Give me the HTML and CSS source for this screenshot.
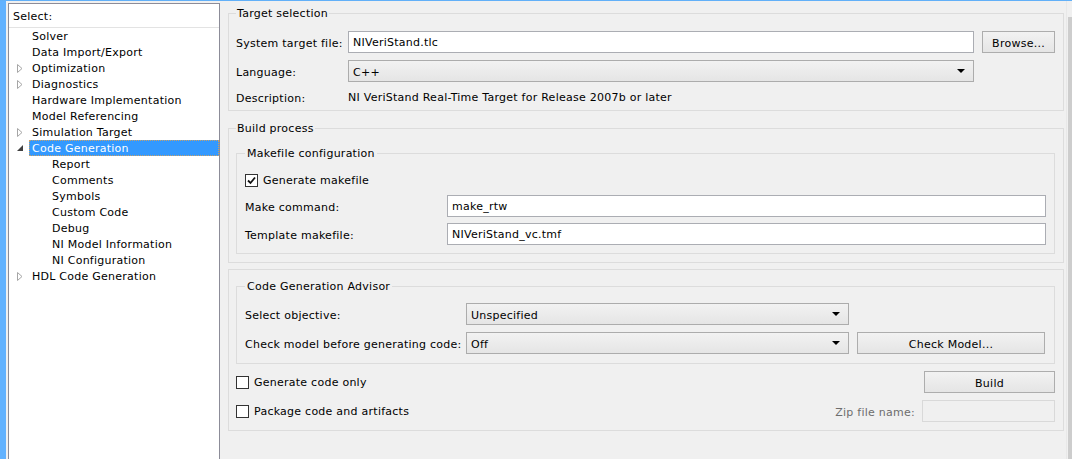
FILE: index.html
```html
<!DOCTYPE html>
<html>
<head>
<meta charset="utf-8">
<link rel="stylesheet" href="styles.css">
</head>
<body>
<div class="window">
  <div class="accent"></div>
  <div class="nav">
    <div class="nav-head">Select:</div>
    <ul class="tree">
      <li class="node"><span class="tw"></span><span class="lbl">Solver</span></li>
      <li class="node"><span class="tw"></span><span class="lbl">Data Import/Export</span></li>
      <li class="node"><span class="tw"><svg width="6" height="9" viewBox="0 0 6 9"><path d="M0.5 0.5 L5 4.5 L0.5 8.5 Z" fill="none" stroke="#a6a6a6"/></svg></span><span class="lbl">Optimization</span></li>
      <li class="node"><span class="tw"><svg width="6" height="9" viewBox="0 0 6 9"><path d="M0.5 0.5 L5 4.5 L0.5 8.5 Z" fill="none" stroke="#a6a6a6"/></svg></span><span class="lbl">Diagnostics</span></li>
      <li class="node"><span class="tw"></span><span class="lbl">Hardware Implementation</span></li>
      <li class="node"><span class="tw"></span><span class="lbl">Model Referencing</span></li>
      <li class="node"><span class="tw"><svg width="6" height="9" viewBox="0 0 6 9"><path d="M0.5 0.5 L5 4.5 L0.5 8.5 Z" fill="none" stroke="#a6a6a6"/></svg></span><span class="lbl">Simulation Target</span></li>
      <li class="node"><span class="tw"><svg width="6" height="6" viewBox="0 0 6 6"><path d="M6 0 L6 6 L0 6 Z" fill="#404040"/></svg></span><span class="lbl sel">Code Generation</span></li>
      <li class="node child"><span class="lbl">Report</span></li>
      <li class="node child"><span class="lbl">Comments</span></li>
      <li class="node child"><span class="lbl">Symbols</span></li>
      <li class="node child"><span class="lbl">Custom Code</span></li>
      <li class="node child"><span class="lbl">Debug</span></li>
      <li class="node child"><span class="lbl">NI Model Information</span></li>
      <li class="node child"><span class="lbl">NI Configuration</span></li>
      <li class="node"><span class="tw"><svg width="6" height="9" viewBox="0 0 6 9"><path d="M0.5 0.5 L5 4.5 L0.5 8.5 Z" fill="none" stroke="#a6a6a6"/></svg></span><span class="lbl">HDL Code Generation</span></li>
    </ul>
  </div>
  <div class="content">
    <fieldset class="group g-target">
      <legend>Target selection</legend>
      <div class="target-grid">
        <label class="lab">System target file:</label>
        <div class="field">NIVeriStand.tlc</div>
        <button class="btn">Browse...</button>
        <label class="lab">Language:</label>
        <div class="combo"><span>C++</span><i class="arrow"></i></div>
        <span></span>
        <label class="lab">Description:</label>
        <div class="desc">NI VeriStand Real-Time Target for Release 2007b or later</div>
      </div>
    </fieldset>

    <fieldset class="group g-build">
      <legend>Build process</legend>
      <fieldset class="group inner g-make">
        <legend>Makefile configuration</legend>
        <div class="check-row"><span class="cb checked"><svg width="9" height="9" viewBox="0 0 9 9"><path d="M1 4.5 L3.5 7 L8 1.5" fill="none" stroke="#111" stroke-width="1.8"/></svg></span><span class="ct">Generate makefile</span></div>
        <div class="make-grid">
          <label class="lab">Make command:</label>
          <div class="field">make_rtw</div>
          <label class="lab">Template makefile:</label>
          <div class="field">NIVeriStand_vc.tmf</div>
        </div>
      </fieldset>
    </fieldset>

    <fieldset class="group g-code">
      <fieldset class="group inner g-adv">
        <legend>Code Generation Advisor</legend>
        <div class="adv-grid">
          <label class="lab">Select objective:</label>
          <div class="combo"><span>Unspecified</span><i class="arrow"></i></div>
          <span></span>
          <label class="lab">Check model before generating code:</label>
          <div class="combo"><span>Off</span><i class="arrow"></i></div>
          <button class="btn">Check Model...</button>
        </div>
      </fieldset>
      <div class="bottom-row">
        <div class="check-row"><span class="cb"></span><span class="ct">Generate code only</span></div>
        <button class="btn wide">Build</button>
      </div>
      <div class="bottom-row">
        <div class="check-row"><span class="cb"></span><span class="ct">Package code and artifacts</span></div>
        <div class="zip"><span class="zip-lab">Zip file name:</span><div class="field disabled"></div></div>
      </div>
    </fieldset>
  </div>
  <div class="scroll"><div class="thumb"></div></div>
</div>
</body>
</html>
```

FILE: styles.css
```css
* { box-sizing: border-box; }
html, body { margin: 0; padding: 0; }
body {
  background: #f0f0f0;
  font-family: "DejaVu Sans", "Liberation Sans", sans-serif;
  font-size: 11px;
  letter-spacing: 0.25px;
  color: #000;
  border-top: 1px solid #62b0f8;
}
.window {
  display: flex;
  height: 458px;
}
.accent {
  width: 6px;
  background: #62b2ff;
  flex: none;
}
.nav {
  width: 212px;
  flex: none;
  margin: 2px 0 0 2px;
  background: #fff;
  border: 1px solid #8c8c98;
  border-bottom: none;
}
.nav-head {
  height: 24px;
  padding-top: 2px;
  line-height: 21px;
  padding-left: 4px;
  border-bottom: 1px solid #e3e3e3;
}
.tree {
  list-style: none;
  margin: 0;
  padding: 0;
}
.node {
  display: flex;
  height: 16px;
}
.tw {
  width: 20px;
  flex: none;
  display: flex;
  align-items: center;
  padding-left: 8px;
}
.tw svg { display: block; }
.lbl {
  flex: 1;
  padding: 2px 3px 0;
  line-height: 14px;
  white-space: nowrap;
}
.child .lbl { padding-left: 43px; }
.sel {
  background: #3399ff;
  color: #fff;
  outline: 1px dotted #c8a068;
  outline-offset: -1px;
}
.content {
  flex: 1;
  padding: 5px 2px 0 8px;
  display: flex;
  flex-direction: column;
}
.scroll {
  width: 6px;
  flex: none;
  border-left: 1px solid #e8e8e8;
  padding-top: 16px;
  display: flex;
  justify-content: flex-end;
}
.thumb {
  width: 4px;
  background: #cdcdcd;
  height: 100%;
}
.group {
  margin: 0;
  border: 1px solid #dcdcdc;
  padding: 11px 8px 5px 7px;
  min-width: 0;
}
.group legend {
  padding: 2px 1px 0;
  line-height: 12px;
}
.inner legend { padding: 2px 2px 0; }
.lab { white-space: nowrap; padding-top: 2px; }
.target-grid {
  display: grid;
  grid-template-columns: 104px 1fr 73px;
  column-gap: 8px;
  row-gap: 7px;
  align-items: center;
}
.field {
  height: 22px;
  padding: 2px 4px 0;
  line-height: 18px;
  background: #fff;
  border: 1px solid #abadb3;
  white-space: nowrap;
}
.field.disabled {
  background: #f0f0f0;
  border-color: #d9d9d9;
}
.combo {
  height: 22px;
  border: 1px solid #acacac;
  background: linear-gradient(#f2f2f2, #e5e5e5);
  display: flex;
  align-items: center;
  justify-content: space-between;
  padding: 0 8px 0 4px;
}
.combo span { padding-top: 2px; }
.arrow {
  width: 0;
  height: 0;
  border-left: 4px solid transparent;
  border-right: 4px solid transparent;
  border-top: 4px solid #000;
}
.btn {
  height: 22px;
  border: 1px solid #adadad;
  background: linear-gradient(#f2f2f2, #e5e5e5);
  font: inherit;
  letter-spacing: inherit;
  color: #000;
  padding: 2px 0 0;
}
.desc { grid-column: 2 / 4; line-height: 14px; padding-top: 2px; }
.g-build { margin-top: 10px; padding-bottom: 8px; }
.g-make { padding: 12px 8px 8px 8px; }
.check-row {
  display: flex;
  align-items: center;
  height: 16px;
}
.ct { padding-top: 2px; line-height: 14px; }
.cb {
  width: 13px;
  height: 13px;
  border: 1px solid #333;
  background: #fff;
  margin-right: 5px;
  display: flex;
  align-items: center;
  justify-content: center;
}
.make-grid {
  margin-top: 7px;
  display: grid;
  grid-template-columns: 202px 1fr;
  row-gap: 6px;
  align-items: center;
}
.g-code { margin-top: 6px; padding: 9px 8px 8px 7px; }
.g-adv { padding: 10px 9px 9px 8px; }
.adv-grid {
  display: grid;
  grid-template-columns: 213px 383px 1fr;
  column-gap: 8px;
  row-gap: 7px;
  align-items: center;
}
.bottom-row {
  display: flex;
  justify-content: space-between;
  align-items: center;
  height: 22px;
  margin-top: 7px;
}
.bottom-row .cb { margin-right: 5px; }
.btn.wide { width: 131px; }
.zip { display: flex; align-items: center; }
.zip-lab { color: #6d6d6d; margin-right: 7px; padding-top: 2px; }
.zip .field { width: 133px; }
```
